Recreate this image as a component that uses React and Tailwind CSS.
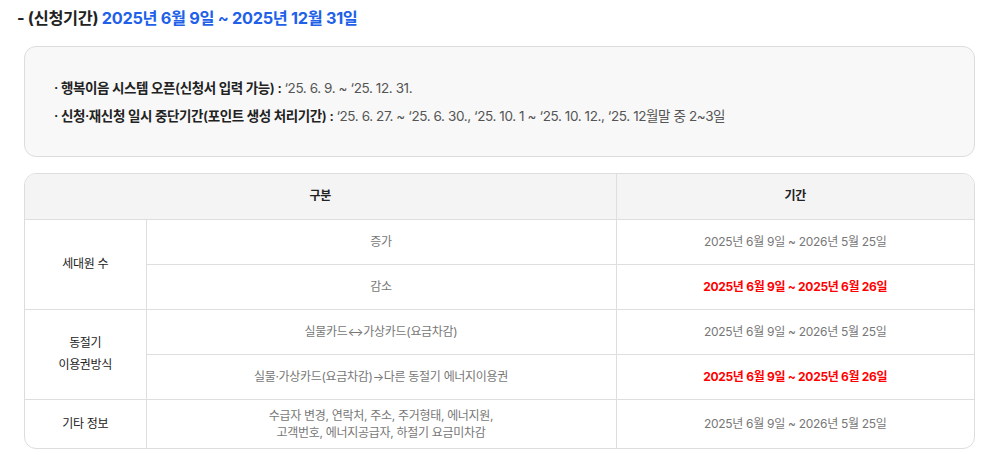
const rows = [
    { sub: "증가", period: "2025년 6월 9일 ~ 2026년 5월 25일", red: false },
    { sub: "감소", period: "2025년 6월 9일 ~ 2025년 6월 26일", red: true },
    { sub: "실물카드↔가상카드(요금차감)", period: "2025년 6월 9일 ~ 2026년 5월 25일", red: false },
    { sub: "실물·가상카드(요금차감)→다른 동절기 에너지이용권", period: "2025년 6월 9일 ~ 2025년 6월 26일", red: true },
];

const cell = "border-[#dedede] text-center align-middle";

const App = () => {
    return (
        <div className="bg-white w-[996px] h-[455px] overflow-hidden font-['Inter','Noto_Sans_CJK_KR',sans-serif] text-[#222]">
            {/* heading */}
            <h2 className="pl-[17px] pt-[6px] text-[16.3px] font-bold leading-[24px] tracking-[-0.3px]">
                - (신청기간) <span className="text-[#2160e8]">2025년 6월 9일 ~ 2025년 12월 31일</span>
            </h2>

            {/* notice box */}
            <div className="ml-[24px] w-[951px] mt-[16px] h-[111px] rounded-xl border border-[#dddddd] bg-[#f8f8f8] px-[29px] pt-[31px] text-[13.5px] leading-[20px] tracking-[-0.4px]">
                <p>
                    <span className="font-semibold">· 행복이음 시스템 오픈(신청서 입력 가능) : </span>
                    <span className="text-[#555]">‘25. 6. 9. ~ ‘25. 12. 31.</span>
                </p>
                <p className="mt-[8px]">
                    <span className="font-semibold">· 신청·재신청 일시 중단기간(포인트 생성 처리기간) : </span>
                    <span className="text-[#555]">‘25. 6. 27. ~ ‘25. 6. 30., ‘25. 10. 1 ~ ‘25. 10. 12., ‘25. 12월말 중 2~3일</span>
                </p>
            </div>

            {/* table */}
            <div className="ml-[24px] w-[951px] mt-[16px] rounded-xl border border-[#dddddd] overflow-hidden">
                <table className="w-full border-collapse text-[12px] tracking-[-0.3px] table-fixed">
                    <colgroup>
                        <col className="w-[121px]" />
                        <col className="w-[470px]" />
                        <col />
                    </colgroup>
                    <thead>
                        <tr className="h-[45px] bg-[#f4f4f4]">
                            <th colSpan={2} className={`${cell} border-r font-semibold text-[#222]`}>구분</th>
                            <th className={`${cell} font-semibold text-[#222]`}>기간</th>
                        </tr>
                    </thead>
                    <tbody>
                        {rows.map((r, i) => (
                            <tr key={i} className="h-[45px]">
                                {i === 0 && (
                                    <td rowSpan={2} className={`${cell} border-t border-r text-[#222]`}>세대원 수</td>
                                )}
                                {i === 2 && (
                                    <td rowSpan={2} className={`${cell} border-t border-r text-[#222] leading-[22px]`}>
                                        동절기
                                        <br />
                                        이용권방식
                                    </td>
                                )}
                                <td className={`${cell} border-t border-r text-[#777]`}>{r.sub}</td>
                                <td className={`${cell} border-t ${r.red ? "text-[#ff0000] font-bold" : "text-[#777]"}`}>
                                    {r.period}
                                </td>
                            </tr>
                        ))}
                        <tr className="h-[49px]">
                            <td className={`${cell} border-t border-r text-[#222]`}>기타 정보</td>
                            <td className={`${cell} border-t border-r text-[#777] leading-[17px]`}>
                                수급자 변경, 연락처, 주소, 주거형태, 에너지원,
                                <br />
                                고객번호, 에너지공급자, 하절기 요금미차감
                            </td>
                            <td className={`${cell} border-t text-[#777]`}>2025년 6월 9일 ~ 2026년 5월 25일</td>
                        </tr>
                    </tbody>
                </table>
            </div>
        </div>
    );
};

export default App;
